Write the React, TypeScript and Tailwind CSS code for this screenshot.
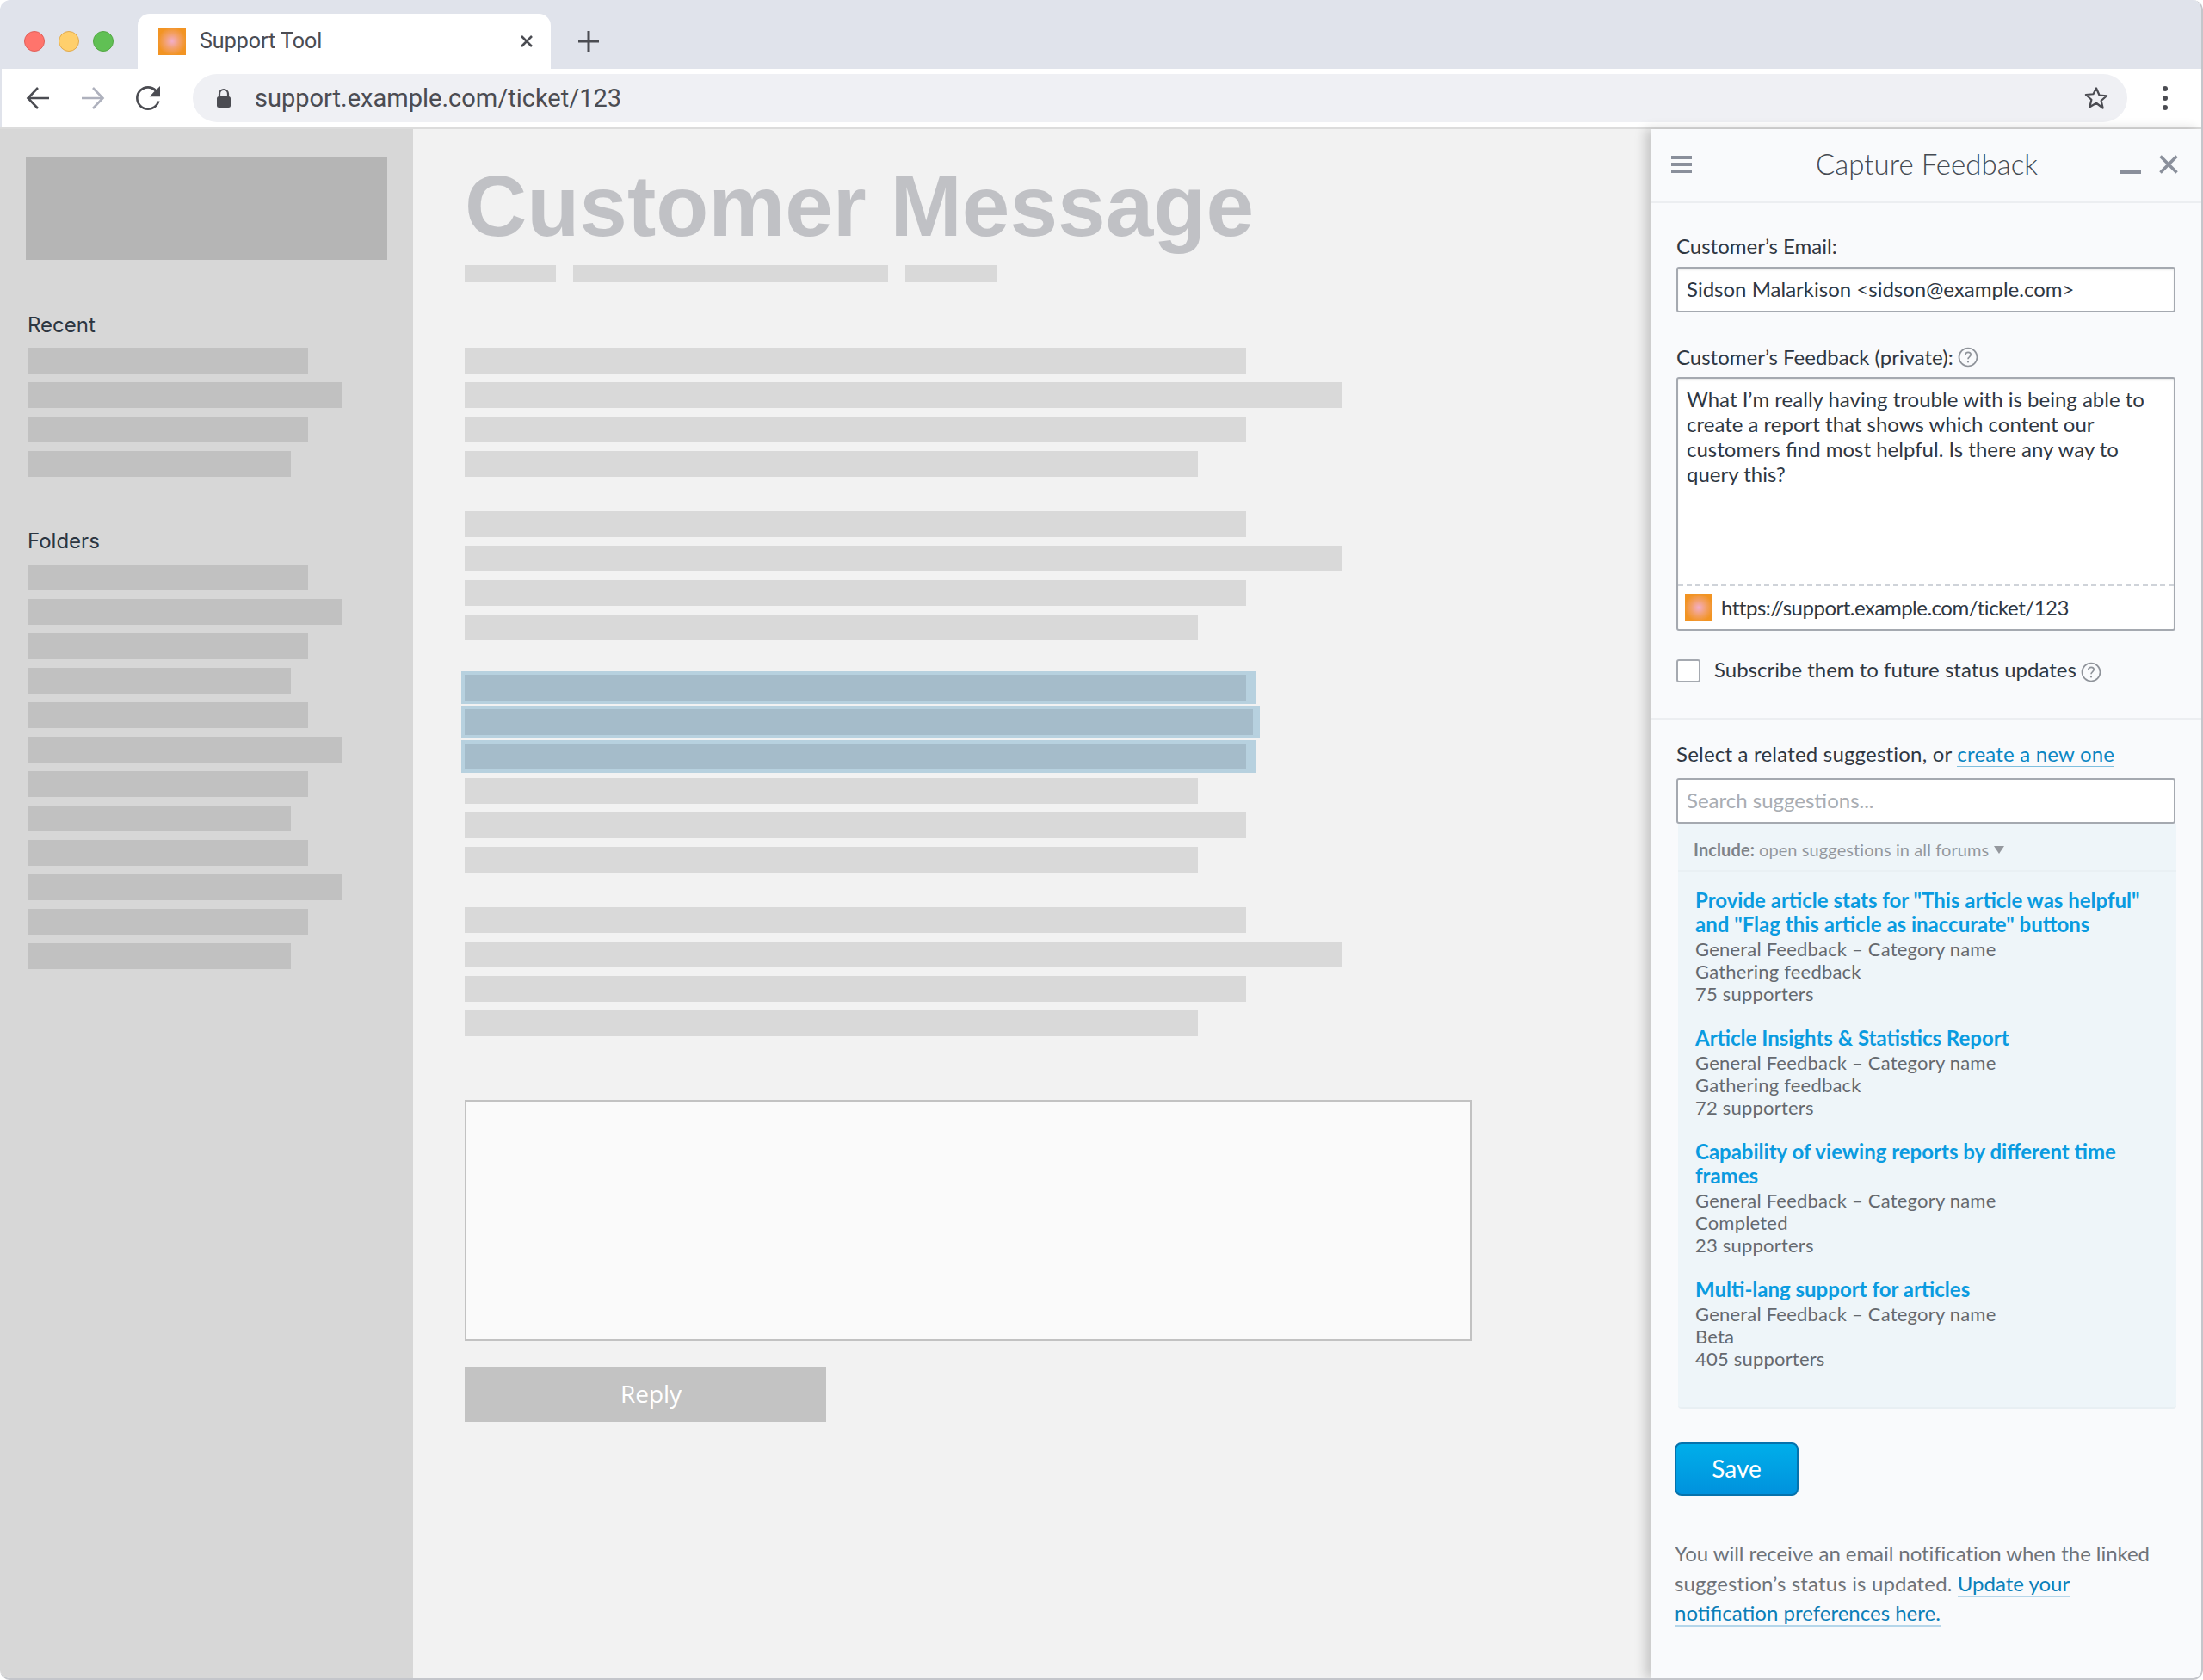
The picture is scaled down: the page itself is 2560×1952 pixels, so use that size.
import React from 'react';

const sans = "font-['Lato','Open_Sans',sans-serif]";
const favicon = 'bg-[radial-gradient(circle,#f3aecb_0%,#f3a06a_38%,#f29423_72%)]';

const sidebarWidths = ['w-[326px]', 'w-[366px]', 'w-[326px]', 'w-[306px]'];
const folderRows = [...sidebarWidths, ...sidebarWidths, ...sidebarWidths];

const suggestions = [
  {
    title: ['Provide article stats for "This article was helpful"', 'and "Flag this article as inaccurate" buttons'],
    status: 'Gathering feedback',
    supporters: '75 supporters',
  },
  { title: ['Article Insights & Statistics Report'], status: 'Gathering feedback', supporters: '72 supporters' },
  {
    title: ['Capability of viewing reports by different time', 'frames'],
    status: 'Completed',
    supporters: '23 supporters',
  },
  { title: ['Multi-lang support for articles'], status: 'Beta', supporters: '405 supporters' },
];

const Help = () => (
  <svg width="24" height="24" viewBox="0 0 24 24" className="shrink-0">
    <circle cx="12" cy="12" r="10.5" fill="none" stroke="#8f939a" strokeWidth="1.7" />
    <path d="M8.8 9.3c.2-1.9 1.6-2.9 3.3-2.9 1.8 0 3.1 1.1 3.1 2.7 0 2.5-3.2 2.5-3.2 5.2" fill="none" stroke="#8f939a" strokeWidth="1.7" />
    <circle cx="12" cy="17.4" r="1.1" fill="#8f939a" />
  </svg>
);

const Bar = ({ w }: { w: string }) => <div className={`h-[30px] bg-[#d9d9d9] ${w}`} />;

const Paragraph = ({ rows }: { rows: string[] }) => (
  <div className="flex flex-col gap-[10px]">
    {rows.map((w, i) => (
      <Bar key={i} w={w} />
    ))}
  </div>
);

const Selected = ({ w, pad }: { w: string; pad: string }) => (
  <div className={`-my-[4px] -ml-[4px] w-fit bg-[#b7d1df] py-[4px] pl-[4px] ${pad}`}>
    <div className={`h-[30px] bg-[#a5bcca] ${w}`} />
  </div>
);

const BrowserChrome = () => (
  <>
    <div className="flex h-[80px] items-end bg-[#e0e3eb]">
      <div className="flex h-[64px] w-[160px] items-start gap-[16px] pl-[28px] pt-[20px]">
        <span className="size-[24px] rounded-full border border-[#e0605a] bg-[#ff746c]" />
        <span className="size-[24px] rounded-full border border-[#e0aa50] bg-[#ffcf6c]" />
        <span className="size-[24px] rounded-full border border-[#55a845] bg-[#60c054]" />
      </div>
      <div className="flex h-[64px] w-[480px] items-center rounded-t-[14px] bg-white pl-[24px]">
        <span className={`size-[32px] ${favicon}`} />
        <span className="ml-[16px] font-['Roboto',sans-serif] text-[25px] text-[#4b4c52]">Support Tool</span>
        <svg width="16" height="16" viewBox="0 0 16 16" className="ml-auto mr-[20px]">
          <path d="M2 2l12 12M14 2L2 14" stroke="#4b4c52" strokeWidth="2.6" />
        </svg>
      </div>
      <svg width="24" height="24" viewBox="0 0 24 24" className="mb-[20px] ml-[32px]">
        <path d="M12 0v24M0 12h24" stroke="#4b4c52" strokeWidth="3" />
      </svg>
    </div>
    <div className="flex h-[68px] items-center border-x-2 border-[#e0e3eb] bg-white">
      <svg width="28" height="28" viewBox="0 0 28 28" className="ml-[28px]">
        <path d="M27 14H3M14 2L2.5 14 14 26" fill="none" stroke="#4b4c52" strokeWidth="2.6" />
      </svg>
      <svg width="28" height="28" viewBox="0 0 28 28" className="ml-[36px]">
        <path d="M1 14h24M14 2l11.5 12L14 26" fill="none" stroke="#aeb1bd" strokeWidth="2.6" />
      </svg>
      <svg width="42" height="42" viewBox="0 0 24 24" className="ml-[29px]">
        <path
          fill="#4b4c52"
          d="M17.65 6.35A7.958 7.958 0 0 0 12 4c-4.42 0-7.99 3.58-7.99 8s3.57 8 7.99 8c3.73 0 6.84-2.55 7.73-6h-1.5A6.4 6.4 0 0 1 12 18.5c-3.59 0-6.5-2.91-6.5-6.5S8.41 5.5 12 5.5c1.66 0 3.24.79 4.32 1.98L13 11h7V4l-2.35 2.35z"
        />
      </svg>
      <div className="ml-[31px] flex h-[56px] w-[2248px] items-center rounded-full bg-[#eff0f4]">
        <svg width="18" height="24" viewBox="0 0 18 24" className="ml-[27px]">
          <path d="M4 11V7a5 5 0 0 1 10 0v4" fill="none" stroke="#4b4c52" strokeWidth="2.2" />
          <rect x="1" y="10" width="16" height="13" rx="2.5" fill="#4b4c52" />
        </svg>
        <span className="ml-[27px] pt-[2px] font-['Roboto',sans-serif] text-[29px] text-[#4b4c52]">support.example.com/ticket/123</span>
        <svg width="30" height="30" viewBox="0 0 24 24" className="ml-auto mr-[21px]">
          <path
            d="M12 2.8l2.8 6.4 6.9.6-5.2 4.6 1.6 6.8L12 16.6l-6.1 3.6 1.6-6.8-5.2-4.6 6.9-.6z"
            fill="none"
            stroke="#4b4c52"
            strokeWidth="1.8"
            strokeLinejoin="round"
          />
        </svg>
      </div>
      <div className="ml-[41px] flex flex-col gap-[5px]">
        <span className="size-[6px] rounded-full bg-[#4b4c52]" />
        <span className="size-[6px] rounded-full bg-[#4b4c52]" />
        <span className="size-[6px] rounded-full bg-[#4b4c52]" />
      </div>
    </div>
  </>
);

const Sidebar = () => (
  <aside className="flex w-[480px] shrink-0 flex-col bg-[#d7d7d7] pt-[32px] font-['Inter',sans-serif] text-[24px] text-[#2c3540]">
    <div className="ml-[30px] h-[120px] w-[420px] bg-[#b5b5b5]" />
    <div className="ml-[32px] mt-[61px] h-[30px] leading-[30px]">Recent</div>
    <div className="ml-[32px] mt-[11px] flex flex-col gap-[10px]">
      {sidebarWidths.map((w, i) => (
        <div key={i} className={`h-[30px] bg-[#c1c1c1] ${w}`} />
      ))}
    </div>
    <div className="ml-[32px] mt-[60px] h-[30px] leading-[30px]">Folders</div>
    <div className="ml-[32px] mt-[12px] flex flex-col gap-[10px]">
      {folderRows.map((w, i) => (
        <div key={i} className={`h-[30px] bg-[#c1c1c1] ${w}`} />
      ))}
    </div>
  </aside>
);

const Main = () => (
  <main className="min-w-0 flex-1 bg-[#f2f2f2] pl-[60px]">
    <h1 className="mt-[33px] h-[112px] whitespace-nowrap font-['Liberation_Sans',sans-serif] text-[100px] font-bold leading-[112px] text-[#c0c1c5]">
      Customer Message
    </h1>
    <div className="mt-[13px] flex gap-[20px]">
      <div className="h-[20px] w-[106px] bg-[#d9d9d9]" />
      <div className="h-[20px] w-[366px] bg-[#d9d9d9]" />
      <div className="h-[20px] w-[106px] bg-[#d9d9d9]" />
    </div>
    <div className="mt-[76px] flex flex-col gap-[40px]">
      <Paragraph rows={['w-[908px]', 'w-[1020px]', 'w-[908px]', 'w-[852px]']} />
      <Paragraph rows={['w-[908px]', 'w-[1020px]', 'w-[908px]', 'w-[852px]']} />
      <div className="flex flex-col gap-[10px]">
        <Selected w="w-[908px]" pad="pr-[12px]" />
        <Selected w="w-[916px]" pad="pr-[8px]" />
        <Selected w="w-[908px]" pad="pr-[12px]" />
        <Bar w="w-[852px]" />
        <Bar w="w-[908px]" />
        <Bar w="w-[852px]" />
      </div>
      <Paragraph rows={['w-[908px]', 'w-[1020px]', 'w-[908px]', 'w-[852px]']} />
    </div>
    <div className="mt-[74px] h-[280px] w-[1170px] border-2 border-[#c2c2c2] bg-[#fafafa]" />
    <div className="mt-[30px] flex h-[64px] w-[420px] items-center justify-center bg-[#c3c3c3] pb-[2px] pl-[13px] font-['Open_Sans',sans-serif] text-[28px] text-white">
      Reply
    </div>
  </main>
);

const Panel = () => (
  <aside className={`z-10 flex w-[640px] shrink-0 flex-col bg-[#f9fafc] shadow-[-6px_0_12px_rgba(0,0,0,0.18)] ${sans} text-[24px] text-[#2f3742]`}>
    <header className="flex h-[86px] shrink-0 items-center border-b-2 border-[#eceef1] pb-[2px]">
      <div className="ml-[24px] flex w-[24px] flex-col gap-[3.5px]">
        <span className="h-[4.5px] bg-[#8a8f9b]" />
        <span className="h-[4.5px] bg-[#8a8f9b]" />
        <span className="h-[4.5px] bg-[#8a8f9b]" />
      </div>
      <h2 className="ml-[144px] w-[256px] whitespace-nowrap text-[33px] font-light text-[#444a52]">Capture Feedback</h2>
      <span className="ml-[98px] mt-[18px] h-[4px] w-[24px] bg-[#8a8f9b]" />
      <svg width="22" height="22" viewBox="0 0 22 22" className="ml-[21px]">
        <path d="M1.5 1.5l19 19M20.5 1.5l-19 19" stroke="#8a8f9b" strokeWidth="3.6" />
      </svg>
    </header>

    <div className="pl-[30px] pr-[30px]">
      <div className="mt-[35px] h-[30px] leading-[30px]">Customer’s Email:</div>
      <div className="mt-[9px] flex h-[53px] items-center rounded-[3px] border-2 border-[#a5a9b0] bg-white pl-[10px] pb-[2px] shadow-[inset_0_2px_2px_rgba(0,0,0,0.08)]">
        Sidson Malarkison &lt;sidson@example.com&gt;
      </div>

      <div className="mt-[37px] flex h-[30px] items-center gap-[5px] leading-[30px]">
        Customer’s Feedback (private):
        <Help />
      </div>
      <div className="mt-[8px] flex h-[295px] flex-col rounded-[3px] border-2 border-[#a5a9b0] bg-white shadow-[inset_0_2px_2px_rgba(0,0,0,0.08)]">
        <p className="h-[239px] pl-[10px] pt-[9px] leading-[29px]">
          What I’m really having trouble with is being able to
          <br />
          create a report that shows which content our
          <br />
          customers find most helpful. Is there any way to
          <br />
          query this?
        </p>
        <div className="flex flex-1 items-center border-t-2 border-dashed border-[#cfd3d9] pl-[8px]">
          <span className={`size-[32px] ${favicon}`} />
          <span className="ml-[10px] tracking-[-0.5px]">https://support.example.com/ticket/123</span>
        </div>
      </div>

      <div className="mt-[33px] flex h-[27px] items-center">
        <span className="h-[27px] w-[28px] rounded-[3px] border-2 border-[#a5a9b0] bg-white" />
        <span className="ml-[16px] pb-[4px]">Subscribe them to future status updates</span>
        <span className="ml-[5px] mt-[2px]">
          <Help />
        </span>
      </div>
    </div>

    <div className="mt-[41px] h-[2px] bg-[#eceef1]" />

    <div className="pl-[30px] pr-[30px]">
      <div className="mt-[25px] h-[30px] leading-[30px] tracking-[0.2px]">
        Select a related suggestion, or{' '}
        <a className="border-b border-[#7fbfdf] text-[#0b87c4]">create a new one</a>
      </div>
      <div className="mt-[13px] flex h-[53px] items-center rounded-[3px] border-2 border-[#a5a9b0] bg-white pb-[2px] pl-[10px] text-[#a9adb3]">
        Search suggestions...
      </div>
      <div className="-mr-[1px] ml-[2px] h-[680px] rounded-b-[4px] border-b-2 border-[#e8eff3] bg-[#eef5f9]">
        <div className="flex h-[56px] items-center border-b-2 border-[#e9f0f4] pl-[18px] pt-[6px] text-[20px] tracking-[0.1px] text-[#94989e]">
          <b className="font-bold text-[#7f8389]">Include:</b>
          <span className="ml-[5px]">open suggestions in all forums</span>
          <svg width="12" height="10" viewBox="0 0 12 10" className="ml-[6px] mt-[2px]">
            <path d="M0 0h12L6 9z" fill="#94989e" />
          </svg>
        </div>
        <div className="flex flex-col gap-[24px] pl-[20px] pt-[19px]">
          {suggestions.map((s) => (
            <div key={s.supporters}>
              {s.title.map((line) => (
                <div key={line} className="h-[28px] whitespace-nowrap text-[24px] font-bold leading-[28px] text-[#0a9be0]">
                  {line}
                </div>
              ))}
              <div className="mt-[2px] text-[22px] leading-[26px] tracking-[0.2px] text-[#65696f]">
                <div>General Feedback – Category name</div>
                <div>{s.status}</div>
                <div>{s.supporters}</div>
              </div>
            </div>
          ))}
        </div>
      </div>

      <button className="-ml-[2px] mt-[39px] flex h-[62px] w-[144px] items-center justify-center rounded-[8px] border-2 border-[#0672ac] bg-gradient-to-b from-[#00aeea] to-[#0092dd] pb-[2px] text-[28px] text-white">
        Save
      </button>
      <p className="-ml-[2px] mt-[50px] text-[24px] leading-[34.5px] text-[#6f7379]">
        <span className="tracking-[-0.06px]">You will receive an email notification when the linked</span>
        <br />
        <span className="tracking-[0.16px]">suggestion’s status is updated.</span>{' '}
        <a className="border-b-2 border-[#b5d6ea] text-[#0b7fb9]">Update your</a>
        <br />
        <a className="border-b-2 border-[#b5d6ea] text-[#0b7fb9]">notification preferences here.</a>
      </p>
    </div>
  </aside>
);

export default function App() {
  return (
    <div className="h-[1952px] w-[2560px] overflow-hidden bg-white">
      <div className="flex h-[1952px] flex-col overflow-hidden rounded-[12px] border-b-2 border-r-2 border-[#c4c6cb]">
        <div className="-mr-[2px]">
          <BrowserChrome />
        </div>
        <div className="flex min-h-0 flex-1 border-t-2 border-[#dcdcdc]">
          <Sidebar />
          <Main />
          <Panel />
        </div>
      </div>
    </div>
  );
}
